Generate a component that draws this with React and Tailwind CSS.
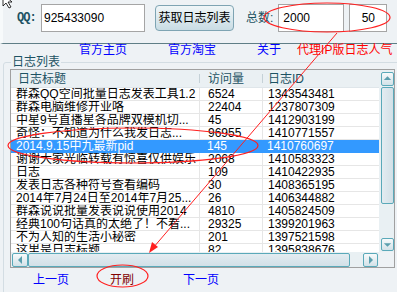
import React from "react";

const rows = [
  ["群森QQ空间批量日志发表工具1.2", "6524", "1343543481"],
  ["群森电脑维修开业咯", "22404", "1237807309"],
  ["中星9号直播星各品牌双模机切...", "45", "1412903199"],
  ["奇怪：不知道为什么我发日志...", "96955", "1410771557"],
  ["2014.9.15中九最新pid", "145", "1410760697"],
  ["谢谢大家光临转载有惊喜仅供娱乐", "2068", "1410583323"],
  ["日志", "109", "1410422935"],
  ["发表日志各种符号查看编码", "30", "1408365195"],
  ["2014年7月24日至2014年7月25...", "26", "1406344882"],
  ["群森说说批量发表说说使用2014", "4810", "1405824509"],
  ["经典100句话真的太绝了！不看...", "29325", "1399201963"],
  ["不为人知的生活小秘密", "201", "1397521598"],
  ["这里是日志标题", "82", "1395838676"],
];

const SELECTED = 4;

function ScrollButton({ dir, className }) {
  const tri = {
    up: "M2 7 L6 3 L10 7 Z",
    down: "M2 4 L6 8 L10 4 Z",
    left: "M8 2 L4 6 L8 10 Z",
    right: "M4 2 L8 6 L4 10 Z",
  }[dir];
  return (
    <div
      className={`flex items-center justify-center border border-[#5aa9b9] rounded-[2px] bg-gradient-to-b from-[#f7fafb] to-[#d3e2e8] ${className}`}
    >
      <svg width="12" height="12" viewBox="0 0 12 12">
        <path d={tri} fill="#5b9fae" />
      </svg>
    </div>
  );
}

function LogTable() {
  return (
    <div className="ml-[6px] mt-px w-[385px] h-[199px] border border-[#a0a0a0] flex flex-col bg-white">
      <div className="flex h-[182px]">
        {/* list */}
        <div className="w-[368px] overflow-hidden">
          <div className="grid grid-cols-[188px_63px_117px] h-[18px] bg-[#eaf0f3] border-b border-[#dfe6ea] text-[12px] leading-[16px] text-[#1d5263] items-center">
            <div className="pl-[7px]">日志标题</div>
            <div className="relative pl-[9px]">
              <span className="absolute left-0 top-[3px] h-[9px] w-px bg-[#c5d1d7]" />
              访问量
            </div>
            <div className="relative pl-[6px]">
              <span className="absolute left-0 top-[3px] h-[9px] w-px bg-[#c5d1d7]" />
              日志ID
            </div>
          </div>
          {rows.map((r, i) => (
            <div
              key={r[2]}
              className={`grid grid-cols-[188px_63px_117px] h-[13px] text-[12px] leading-[12px] ${
                i === SELECTED
                  ? "bg-[#3399ff] text-white"
                  : "text-black border-b border-[#e6e6e6]"
              }`}
            >
              <div className="pl-[5px] whitespace-nowrap overflow-hidden">{r[0]}</div>
              <div className={`pl-[8px] ${i === SELECTED ? "" : "border-l border-[#e6e6e6]"}`}>{r[1]}</div>
              <div className={`pl-[5px] ${i === SELECTED ? "" : "border-l border-[#e6e6e6]"}`}>{r[2]}</div>
            </div>
          ))}
        </div>
        {/* vertical scrollbar */}
        <div className="w-[15px] bg-[#e9f0f3] flex flex-col items-center pt-[2px] pl-px">
          <ScrollButton dir="up" className="w-[13px] h-[14px]" />
          <div className="mt-[1px] w-[13px] h-[117px] border border-[#5aa9b9] rounded-[2px] bg-gradient-to-r from-[#e3ecf1] to-[#d2e0e7]" />
          <div className="flex-1" />
          <ScrollButton dir="down" className="w-[13px] h-[13px] mb-[1px]" />
        </div>
      </div>
      {/* horizontal scrollbar */}
      <div className="flex h-[15px] bg-[#e9f0f3]">
        <div className="w-[368px] flex items-center pl-px">
          <ScrollButton dir="left" className="w-[16px] h-[14px]" />
          <div className="w-[322px] h-[14px] border border-[#5aa9b9] rounded-[2px] bg-gradient-to-b from-[#e3ecf1] to-[#d2e0e7]" />
          <div className="w-[13px]" />
          <ScrollButton dir="right" className="w-[15px] h-[14px]" />
        </div>
        <div className="flex-1 bg-[#eef2f5]" />
      </div>
    </div>
  );
}

export default function App() {
  return (
    <div className="relative w-[397px] h-[292px] overflow-hidden bg-[#eef2f5] font-['Liberation_Sans','Noto_Sans_CJK_SC',sans-serif]">
      {/* top panel */}
      <div className="h-[44px] flex items-start pt-[4px] pl-[14px] border-b border-[#5f7e86] border-l-[3px] border-l-[#f7fafb]">
        <span className="mt-[7px] w-[24px] text-[12px] leading-[14px] font-bold tracking-[-1px] text-[#1d5263] font-['Liberation_Mono',monospace]">
          QQ:
        </span>
        <input
          readOnly
          value="925433090"
          className="w-[104px] h-[28px] border border-[#a5a5a5] bg-white pl-[2px] text-[12px] text-black outline-none"
        />
        <button className="ml-[10px] mt-px w-[79px] h-[26px] rounded-[4px] border border-[#7ea4b3] bg-gradient-to-b from-[#f0f6f8] to-[#c9dce4] text-[12px] text-black">
          获取日志列表
        </button>
        <span className="ml-[12px] mt-[7px] text-[12px] leading-[14px] text-[#1d5263]">总数:</span>
        <input
          readOnly
          value="2000"
          className="ml-[5px] w-[66px] h-[28px] border border-[#a5a5a5] bg-white pl-[4px] text-[12px] text-black outline-none"
        />
        <input
          readOnly
          value="50"
          className="ml-[5px] w-[38px] h-[28px] border border-[#a5a5a5] bg-white text-center text-[12px] text-black outline-none"
        />
      </div>

      {/* link row */}
      <div className="flex h-[12px] text-[12px] leading-[12px] pl-[79px]">
        <span className="text-[#0000ff]">官方主页</span>
        <span className="ml-[41px] text-[#0000ff]">官方淘宝</span>
        <span className="ml-[41px] text-[#0000ff]">关于</span>
        <span className="ml-[16px] text-[#ff0000]">代理IP版日志人气</span>
      </div>

      {/* group box */}
      <fieldset className="ml-[3px] w-[400px] h-[260px] border border-[#d3dde3] rounded-[3px]">
        <legend className="ml-[7px] px-px text-[12px] leading-[12px] text-[#1d5263]">日志列表</legend>
        <LogTable />
        <div className="flex mt-[6px] text-[12px] leading-[12px]">
          <span className="ml-[29px] text-[#0000ff]">上一页</span>
          <span className="ml-[41px] text-[#800000]">开刷</span>
          <span className="ml-[49px] text-[#0000ff]">下一页</span>
        </div>
      </fieldset>

      {/* red annotations and cursor drawn over the screenshot */}
      <svg className="absolute inset-0 pointer-events-none" width="397" height="292">
        <ellipse cx="327" cy="17.5" rx="63" ry="14.5" fill="none" stroke="#ff2020" strokeWidth="1.2" />
        <ellipse cx="133" cy="145.5" rx="125" ry="17.5" fill="none" stroke="#ff2020" strokeWidth="1.2" />
        <ellipse cx="122.5" cy="276" rx="25.5" ry="11" fill="none" stroke="#ff2020" strokeWidth="1.2" />
        <line x1="337" y1="33" x2="153" y2="248" stroke="#ff2020" strokeWidth="1" />
        <polygon points="149,253 152,242 158,247" fill="#ff2020" />
        <polygon
          points="3,-6 3,6 6,3 9,8 11,7 8,2 12,2"
          fill="#ffffff"
          stroke="#000000"
          strokeWidth="0.8"
        />
      </svg>
    </div>
  );
}
